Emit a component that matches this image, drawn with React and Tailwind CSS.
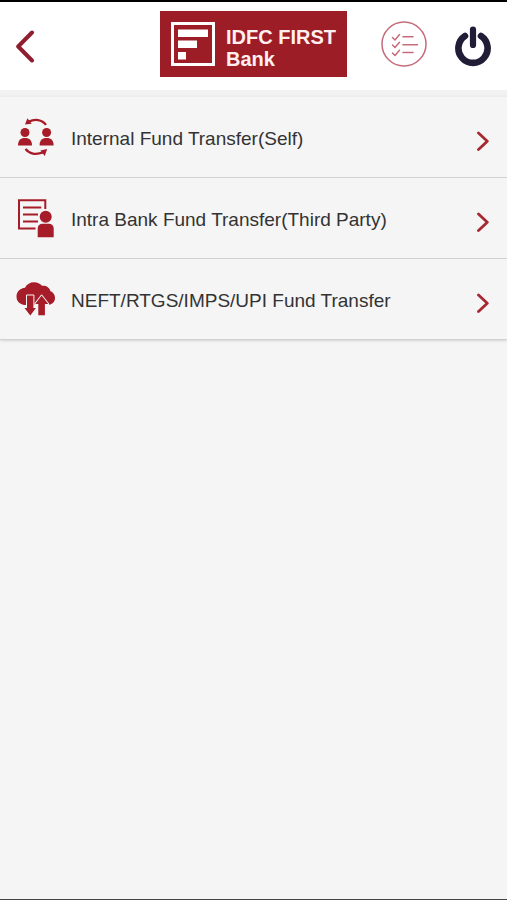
import React from 'react';

const SelfTransferIcon = () => (
  <svg className="h-10 w-10 shrink-0 text-[#a61c28]" viewBox="0 0 40 40" fill="currentColor" aria-hidden="true">
    <circle cx="9" cy="15.5" r="4.5" />
    <path d="M2 28.4c0-4.8 2.3-7.3 7-7.3s7 2.500 7 7.300z" />
    <circle cx="30.6" cy="15.5" r="4.5" />
    <path d="M23.600 28.400c0-4.800 2.300-7.300 7-7.300s7 2.500 7 7.300z" />
    <path d="M13 4.600C18.500 1.700 26 2.300 30 7.900" fill="none" stroke="currentColor" strokeWidth="2.300" />
    <path d="M9 7.400L11.400 1.200L15.700 6.700z" />
    <path d="M9.600 31.900C13 37 20 38 27 35.400" fill="none" stroke="currentColor" strokeWidth="2.300" />
    <path d="M24.400 33.600L31.200 32L28.700 39z" />
  </svg>
);

const ThirdPartyIcon = () => (
  <svg className="h-10 w-10 shrink-0 text-[#a61c28]" viewBox="0 0 40 40" fill="none" stroke="currentColor" strokeWidth="2" aria-hidden="true">
    <path d="M29.300 11V2.300H3V30.500H19.500" />
    <path d="M7 9.500H25.300M7 16.500H22M7 23.500H22" />
    <circle cx="29.700" cy="18.700" r="6" fill="currentColor" stroke="none" />
    <path d="M21.700 39.300V30.500a4.800 4.800 0 0 1 4.800-4.800h6.400a4.800 4.800 0 0 1 4.800 4.800v8.800z" fill="currentColor" stroke="none" />
  </svg>
);

const CloudTransferIcon = () => (
  <svg className="h-10 w-10 shrink-0 text-[#a61c28]" viewBox="0 0 40 40" fill="currentColor" aria-hidden="true">
    <path d="M9 26C3.500 25.500.500 22 .500 17.500C.500 12.500 4 9.300 9 8.700C11 5.300 14 3.300 18 3.300C21.500 3.300 24 4.500 26 6.800C30.500 6.500 33.500 8.500 34.300 12C37.500 13.500 39 16 39 19C39 23 36 26 31 26z" />
    <path
      d="M11 16.500H17.400V29H19.900L14.300 36.600L8.500 29H11z"
      stroke="#f5f5f5" strokeWidth="2" strokeLinejoin="round" paintOrder="stroke"
    />
    <path
      d="M25.600 16.500L32.300 25H28.900V36.300H22.300V25H19.200z"
      stroke="#f5f5f5" strokeWidth="2" strokeLinejoin="round" paintOrder="stroke"
    />
  </svg>
);

const transfers = [
  { label: 'Internal Fund Transfer(Self)', icon: SelfTransferIcon },
  { label: 'Intra Bank Fund Transfer(Third Party)', icon: ThirdPartyIcon },
  { label: 'NEFT/RTGS/IMPS/UPI Fund Transfer', icon: CloudTransferIcon },
];

const Logo = () => (
  <div className="flex items-start gap-[11px] bg-[#9d1d27] px-[11px] pt-[11px] pb-[7px]">
    <svg className="h-11 w-11 shrink-0" viewBox="0 0 44 44" fill="white" aria-hidden="true">
      <rect x="1.500" y="1.500" width="41" height="41" fill="none" stroke="white" strokeWidth="3" />
      <rect x="7" y="7.500" width="30" height="7.500" />
      <rect x="7" y="18.500" width="19" height="7.500" />
      <rect x="7" y="30" width="8" height="7.500" />
    </svg>
    <div className="pt-1 text-[20px] leading-[22px] font-bold whitespace-nowrap text-[#fff0f0]">
      IDFC FIRST
      <br />
      Bank
    </div>
  </div>
);

const Header = () => (
  <header className="grid grid-cols-[1fr_auto_1fr] items-center bg-white px-4 pt-[9px] pb-[13px]">
    <button type="button" aria-label="Back" className="justify-self-start">
      <svg className="h-10 w-5" viewBox="0 0 20 40" fill="none" stroke="#8f1f30" strokeWidth="4" strokeLinecap="round" strokeLinejoin="round">
        <path d="M16 8.500L2.200 22.500L16 36.500" />
      </svg>
    </button>
    <Logo />
    <div className="flex items-center gap-7 justify-self-end">
      <button type="button" aria-label="Requests">
        <svg className="h-[46px] w-[46px]" viewBox="0 0 46 46" fill="none" stroke="#c66c7c" strokeWidth="1.500" strokeLinecap="round" strokeLinejoin="round">
          <circle cx="23" cy="23" r="22" />
          <path d="M22 15.700H32M22 23.700H36.500M22 31.500H32" />
          <path d="M11.500 16.500L14 19L18.500 13.500M11.500 24L14 26.500L18.500 21.300M11.500 32L14 34.500L18.500 29.300" />
        </svg>
      </button>
      <button type="button" aria-label="Log out">
        <svg className="h-[46px] w-9" viewBox="0 0 36 46" fill="none" stroke="#211d36" strokeLinecap="round">
          <path d="M10 15.100A14.600 14.600 0 1 0 26 15.100" strokeWidth="6.600" />
          <path d="M18 8.500V24" strokeWidth="6.200" />
        </svg>
      </button>
    </div>
  </header>
);

const App = () => {
  return (
    <div className="flex min-h-screen flex-col border-t-2 border-b border-t-black border-b-[#444444] bg-[#f5f5f5] font-['Liberation_Sans',Arial,sans-serif] text-[#333333]">
      <Header />

      <main className="border-t-[6px] border-[#f2f2f2]">
        <ul className="border-t border-[#ececec] shadow-sm">
          {transfers.map(({ label, icon: Icon }) => (
            <li key={label} className="border-b border-[#d2d2d2]">
              <a href="#" className="flex min-h-20 items-center px-4">
                <Icon />
                <span className="flex-1 pt-1 pl-[15px] text-[19px] leading-6">{label}</span>
                <svg className="h-7 w-4 shrink-0" viewBox="0 0 16 28" fill="none" stroke="#a82831" strokeWidth="2.800" strokeLinecap="round" strokeLinejoin="round" aria-hidden="true">
                  <path d="M3.500 10L12.300 18.200L3.500 26.500" />
                </svg>
              </a>
            </li>
          ))}
        </ul>
      </main>
    </div>
  );
};

export default App;
